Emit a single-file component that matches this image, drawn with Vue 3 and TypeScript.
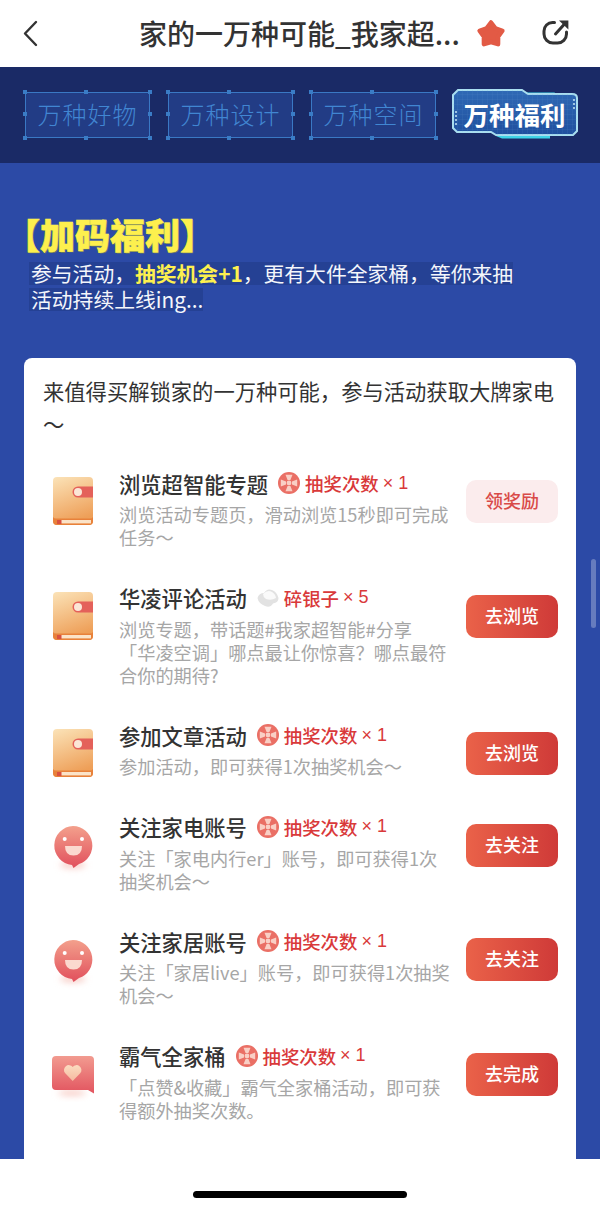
<script setup lang="ts">
interface Task {
  title: string
  icon: 'book' | 'smile' | 'heart'
  reward: 'lottery' | 'silver'
  rewardText: string
  count: number
  desc: string[]
  action: string
  claim?: boolean
}

const tabs = ['万种好物', '万种设计', '万种空间']
const handles = ['tl', 'tm', 'tr', 'ml', 'mr', 'bl', 'bm', 'br']

const tasks: Task[] = [
  { title: '浏览超智能专题', icon: 'book', reward: 'lottery', rewardText: '抽奖次数', count: 1, desc: ['浏览活动专题页，滑动浏览15秒即可完成', '任务～'], action: '领奖励', claim: true },
  { title: '华凌评论活动', icon: 'book', reward: 'silver', rewardText: '碎银子', count: 5, desc: ['浏览专题，带话题#我家超智能#分享', '「华凌空调」哪点最让你惊喜？哪点最符', '合你的期待?'], action: '去浏览' },
  { title: '参加文章活动', icon: 'book', reward: 'lottery', rewardText: '抽奖次数', count: 1, desc: ['参加活动，即可获得1次抽奖机会～'], action: '去浏览' },
  { title: '关注家电账号', icon: 'smile', reward: 'lottery', rewardText: '抽奖次数', count: 1, desc: ['关注「家电内行er」账号，即可获得1次', '抽奖机会～'], action: '去关注' },
  { title: '关注家居账号', icon: 'smile', reward: 'lottery', rewardText: '抽奖次数', count: 1, desc: ['关注「家居live」账号，即可获得1次抽奖', '机会～'], action: '去关注' },
  { title: '霸气全家桶', icon: 'heart', reward: 'lottery', rewardText: '抽奖次数', count: 1, desc: ['「点赞&收藏」霸气全家桶活动，即可获', '得额外抽奖次数。'], action: '去完成' }
]
</script>

<template>
  <div class="page">
    <header class="nav">
      <svg class="back" width="16" height="27" viewBox="0 0 16 27">
        <path d="M14 2 L3 13.5 L14 25" fill="none" stroke="#333" stroke-width="2.4" stroke-linecap="round" stroke-linejoin="round" />
      </svg>
      <div class="nav-title">家的一万种可能_我家超...</div>
      <svg class="star" width="32" height="30" viewBox="0 0 32 30">
        <path d="M16 4.5 L20.4 10.4 L27.4 12.8 L23.1 18.8 L23.05 26.2 L16 24 L8.95 26.2 L8.9 18.8 L4.6 12.8 L11.6 10.4 Z" fill="#e25a45" stroke="#e25a45" stroke-width="4.5" stroke-linejoin="round" />
      </svg>
      <svg class="share" width="28" height="27" viewBox="0 0 28 27">
        <path d="M12.5 3.5 H10.5 A8.5 8.5 0 0 0 2 12 V15 A9 9 0 0 0 11 24 H15.5 A9 9 0 0 0 24.5 15 V13" fill="none" stroke="#333" stroke-width="3" stroke-linecap="round" />
        <path d="M13.5 15 L22.5 5" fill="none" stroke="#333" stroke-width="3" stroke-linecap="round" />
        <path d="M17 1.6 H26.4 V10.6 Z" fill="#333" />
      </svg>
    </header>

    <nav class="tabs">
      <div v-for="tab in tabs" :key="tab" class="tab">
        <span v-for="h in handles" :key="h" class="handle" :class="h"></span>
        {{ tab }}
      </div>
      <div class="tab-active">
        <svg class="tab-active-bg" width="128" height="52" viewBox="0 0 128 52">
          <defs>
            <linearGradient id="activeFill" x1="0" y1="0" x2="0" y2="1">
              <stop offset="0" stop-color="#2f6ab6" />
              <stop offset="1" stop-color="#1f4f9e" />
            </linearGradient>
            <pattern id="activeGrid" width="5" height="5" patternUnits="userSpaceOnUse">
              <path d="M5 0 H0 V5" fill="none" stroke="#5f93cf" stroke-width="0.5" opacity="0.45" />
            </pattern>
          </defs>
          <path d="M71 3.5 H103 L100 6.5 H75 Z" fill="#3fd4e6" />
          <path d="M44 47 H98 V49.5 H50 Z" fill="#3fd4e6" />
          <path d="M6 1 H70 L76 5 H120 Q125 5 125 9 V42 L121 46 H44 L39 43 H5 L1 39 V6 Z" fill="url(#activeFill)" stroke="#a9def0" stroke-width="2" />
          <path d="M6 1 H70 L76 5 H120 Q125 5 125 9 V42 L121 46 H44 L39 43 H5 L1 39 V6 Z" fill="url(#activeGrid)" />
          <path d="M4 22 V36 M122 10 V22" stroke="#cfeefa" stroke-width="1.4" stroke-dasharray="2 2" />
        </svg>
        <span class="tab-active-text">万种福利</span>
      </div>
    </nav>

    <main class="main">
      <h1 class="welfare-title">【加码福利】</h1>
      <div class="welfare-desc">
        <span class="mark">参与活动，<b>抽奖机会+1</b>，更有大件全家桶，等你来抽</span>
        <span class="mark">活动持续上线ing...</span>
      </div>

      <section class="card">
        <p class="intro">来值得买解锁家的一万种可能，参与活动获取大牌家电～</p>

        <div class="task-list">
          <div v-for="task in tasks" :key="task.title" class="task">
            <div class="task-icon">
              <svg v-if="task.icon === 'book'" width="42" height="50" viewBox="0 0 42 50">
                <defs>
                  <linearGradient id="bookFill" x1="0" y1="0" x2="0.3" y2="1">
                    <stop offset="0" stop-color="#fbe3b8" />
                    <stop offset="1" stop-color="#ee9f58" />
                  </linearGradient>
                </defs>
                <rect x="1" y="1" width="40" height="48" rx="4" fill="url(#bookFill)" />
                <path d="M1 41 Q2 42.5 4 42.5 H38 Q40 42.5 41 41 V45 Q41 49 37 49 H5 Q1 49 1 45 Z" fill="#e8813a" />
                <rect x="9" y="44" width="30" height="3.4" fill="#fbe3c8" />
                <rect x="5" y="44" width="4.5" height="4" fill="#d9503f" />
                <path d="M26 10.5 H41 V21.5 H26 A5.5 5.5 0 0 1 26 10.5 Z" fill="#e4615a" />
                <circle cx="26" cy="16" r="4" fill="#fbe6d6" />
              </svg>
              <svg v-else-if="task.icon === 'smile'" width="42" height="50" viewBox="0 0 42 50">
                <defs>
                  <linearGradient id="smileFill" x1="0" y1="0" x2="0" y2="1">
                    <stop offset="0" stop-color="#f3a08c" />
                    <stop offset="1" stop-color="#e14f5c" />
                  </linearGradient>
                  <filter id="smileGlow" x="-40%" y="-100%" width="180%" height="300%"><feGaussianBlur stdDeviation="3" /></filter>
                </defs>
                <ellipse cx="21" cy="45" rx="13" ry="3.5" fill="#f8cfc8" filter="url(#smileGlow)" />
                <path d="M21 6 A19.5 19.5 0 0 1 27 44 L21.5 48 L20 44.9 A19.5 19.5 0 0 1 21 6 Z" fill="url(#smileFill)" />
                <circle cx="12.7" cy="19" r="2" fill="#fff" />
                <circle cx="30" cy="19" r="2" fill="#fff" />
                <path d="M13 26 H30 Q30 35.5 21.5 35.5 Q13 35.5 13 26 Z" fill="#fbd9cf" />
              </svg>
              <svg v-else width="46" height="50" viewBox="0 0 46 50">
                <defs>
                  <linearGradient id="heartFill" x1="0" y1="0" x2="0" y2="1">
                    <stop offset="0" stop-color="#f29b90" />
                    <stop offset="1" stop-color="#e2545f" />
                  </linearGradient>
                  <linearGradient id="heartInner" x1="0" y1="0" x2="0" y2="1">
                    <stop offset="0" stop-color="#fbdcc0" />
                    <stop offset="1" stop-color="#f6b9a0" />
                  </linearGradient>
                  <filter id="heartGlow" x="-40%" y="-100%" width="180%" height="300%"><feGaussianBlur stdDeviation="3" /></filter>
                </defs>
                <ellipse cx="20" cy="44" rx="14" ry="3" fill="#f8cfc8" filter="url(#heartGlow)" />
                <path d="M4 7 H38 Q42 7 42 11 V44.5 L36 41 H4 Q0 41 0 37 V11 Q0 7 4 7 Z" fill="url(#heartFill)" />
                <path d="M20.7 32 L13 24 A4.8 4.8 0 0 1 20.7 18 A4.8 4.8 0 0 1 28.4 24 Z" fill="url(#heartInner)" />
              </svg>
            </div>

            <div class="task-body">
              <div class="task-head">
                <span class="task-title">{{ task.title }}</span>
                <svg v-if="task.reward === 'lottery'" class="reward-icon" width="22" height="22" viewBox="0 0 22 22">
                  <circle cx="11" cy="11" r="11" fill="#ea6f65" />
                  <g fill="#f9cfc5">
                    <circle cx="11" cy="11" r="2.4" />
                    <path d="M7.5 2.8 H14.5 L12.4 8 H9.6 Z" />
                    <path d="M7.5 19.2 H14.5 L12.4 14 H9.6 Z" />
                    <path d="M2.8 7.5 V14.5 L8 12.4 V9.6 Z" />
                    <path d="M19.2 7.5 V14.5 L14 12.4 V9.6 Z" />
                  </g>
                </svg>
                <svg v-else class="reward-icon" width="22" height="22" viewBox="0 0 22 22">
                  <path d="M0.5 11 Q2 6 7 6 Q10 1 15 3 Q20 5 21.5 11 Q21.5 15.5 16 16.5 Q13 21.5 8 19 Q1.5 16.5 0.5 11 Z" fill="#e2e2e2" />
                  <path d="M6 7 Q10.5 2.5 15 5 Q18.5 7 19 11 Q14 14 9 12 Q6 10 6 7 Z" fill="#fafafa" />
                </svg>
                <span class="reward-text">{{ task.rewardText }}</span>
                <span class="reward-count">× {{ task.count }}</span>
              </div>
              <p class="task-desc">
                <span v-for="line in task.desc" :key="line" class="desc-line">{{ line }}</span>
              </p>
            </div>

            <button class="task-btn" :class="{ claim: task.claim }">{{ task.action }}</button>
          </div>
        </div>
      </section>

      <div class="scrollbar"></div>
    </main>

    <footer class="footer">
      <div class="home-bar"></div>
    </footer>
  </div>
</template>

<style scoped>
.page {
  width: 600px;
  height: 1211px;
  display: flex;
  flex-direction: column;
  overflow: hidden;
  background: #fff;
  font-family: "Noto Sans CJK SC", "Liberation Sans", sans-serif;
}

.nav {
  height: 67px;
  flex: none;
  display: flex;
  align-items: center;
  padding-left: 22px;
  padding-right: 30px;
  background: #fff;
}
.back {
  flex: none;
  margin-top: -1px;
}
.nav-title {
  margin-left: 101px;
  margin-top: -2px;
  width: 326px;
  font-size: 28px;
  font-weight: 500;
  line-height: 40px;
  color: #333;
  white-space: nowrap;
}
.star {
  flex: none;
  margin-left: 14px;
  margin-top: -2px;
}
.share {
  flex: none;
  margin-left: 35px;
  margin-top: -2px;
}

.tabs {
  height: 96px;
  flex: none;
  display: flex;
  align-items: flex-start;
  gap: 18px;
  padding: 25px 0 0 25px;
  background: #1a2a66;
  box-sizing: border-box;
}
.tab {
  position: relative;
  width: 125px;
  height: 46px;
  box-sizing: border-box;
  border: 1px solid #3a78c4;
  background: #223c85;
  color: #4186d2;
  font-size: 24px;
  font-weight: 300;
  line-height: 41px;
  text-align: center;
  letter-spacing: 1px;
}
.handle {
  position: absolute;
  width: 4px;
  height: 4px;
  background: #3a7cc6;
}
.tl { left: -3px; top: -3px; }
.tm { left: 58px; top: -3px; }
.tr { right: -3px; top: -3px; }
.ml { left: -3px; top: 19px; }
.mr { right: -3px; top: 19px; }
.bl { left: -3px; bottom: -3px; }
.bm { left: 58px; bottom: -3px; }
.br { right: -3px; bottom: -3px; }

.tab-active {
  position: relative;
  width: 128px;
  height: 52px;
  margin-left: -2px;
  margin-top: -3px;
  flex: none;
  display: flex;
  align-items: center;
  justify-content: center;
}
.tab-active-bg {
  position: absolute;
  left: 0;
  top: 0;
}
.tab-active-text {
  position: relative;
  margin-top: -3px;
  margin-left: -3px;
  font-size: 25.5px;
  font-weight: 700;
  color: #fff;
  line-height: 1;
  white-space: nowrap;
}

.main {
  position: relative;
  flex: 1;
  min-height: 0;
  overflow: hidden;
  padding: 49px 24px 0;
  background: #2c4aa6;
}
.welfare-title {
  margin: 0 0 0 -19px;
  font-size: 35px;
  font-weight: 900;
  line-height: 44px;
  color: #fdf04e;
  -webkit-text-stroke: 0.6px #fdf04e;
  text-shadow: 1px 1px 0 #6b7a5a;
  white-space: nowrap;
}
.welfare-desc {
  display: flex;
  flex-direction: column;
  align-items: flex-start;
  gap: 3px;
  margin: 6px 0 0 5px;
  font-size: 20.8px;
  line-height: 23px;
  color: #f4f6fb;
  white-space: nowrap;
}
.mark {
  padding-left: 2px;
  background: #254194;
}
.mark b {
  color: #fdf04e;
  font-weight: 700;
}

.card {
  margin-top: 47px;
  height: 830px;
  box-sizing: border-box;
  padding-top: 16px;
  background: #fff;
  border-radius: 8px 8px 0 0;
}
.intro {
  margin: 0;
  padding: 0 19px;
  font-size: 21.3px;
  line-height: 33px;
  color: #333;
}
.task-list {
  display: flex;
  flex-direction: column;
  gap: 34.5px;
  margin-top: 30px;
  padding: 0 18px 0 28px;
}
.task {
  display: flex;
  align-items: flex-start;
}
.task-icon {
  width: 42px;
  height: 50px;
  flex: none;
  margin-top: 6px;
  margin-right: 25px;
}
.task-icon svg {
  overflow: visible;
}
.task-body {
  flex: 1;
  min-width: 0;
  padding-bottom: 1px;
}
.task-head {
  display: flex;
  align-items: center;
  height: 26px;
  white-space: nowrap;
}
.task-title {
  font-size: 21.3px;
  font-weight: 500;
  color: #333;
}
.reward-icon {
  flex: none;
  margin-left: 10px;
}
.reward-text {
  margin-left: 5px;
  font-size: 18.4px;
  font-weight: 500;
  color: #d9393a;
}
.reward-count {
  margin-left: 4px;
  font-size: 18px;
  font-family: "Liberation Sans", sans-serif;
  color: #d9393a;
}
.task-desc {
  margin: 7px 0 0;
  font-size: 18.2px;
  line-height: 23px;
  color: #a6a6a6;
}
.desc-line {
  display: block;
  white-space: nowrap;
}
.task-btn {
  width: 92px;
  height: 43px;
  flex: none;
  margin-top: 10px;
  padding: 0 0 3px;
  border: none;
  border-radius: 10px;
  background: linear-gradient(90deg, #ea6249, #cf3a38);
  color: #fff;
  font-family: inherit;
  font-size: 18px;
  font-weight: 500;
}
.task-btn.claim {
  background: #fbeced;
  color: #d94a48;
}

.scrollbar {
  position: absolute;
  right: 4px;
  top: 396px;
  width: 5px;
  height: 69px;
  border-radius: 3px;
  background: rgba(255, 255, 255, 0.28);
}

.footer {
  height: 52px;
  flex: none;
  display: flex;
  justify-content: center;
  padding-top: 32px;
  box-sizing: border-box;
  background: #fff;
}
.home-bar {
  width: 214px;
  height: 7px;
  border-radius: 4px;
  background: #000;
}
</style>
